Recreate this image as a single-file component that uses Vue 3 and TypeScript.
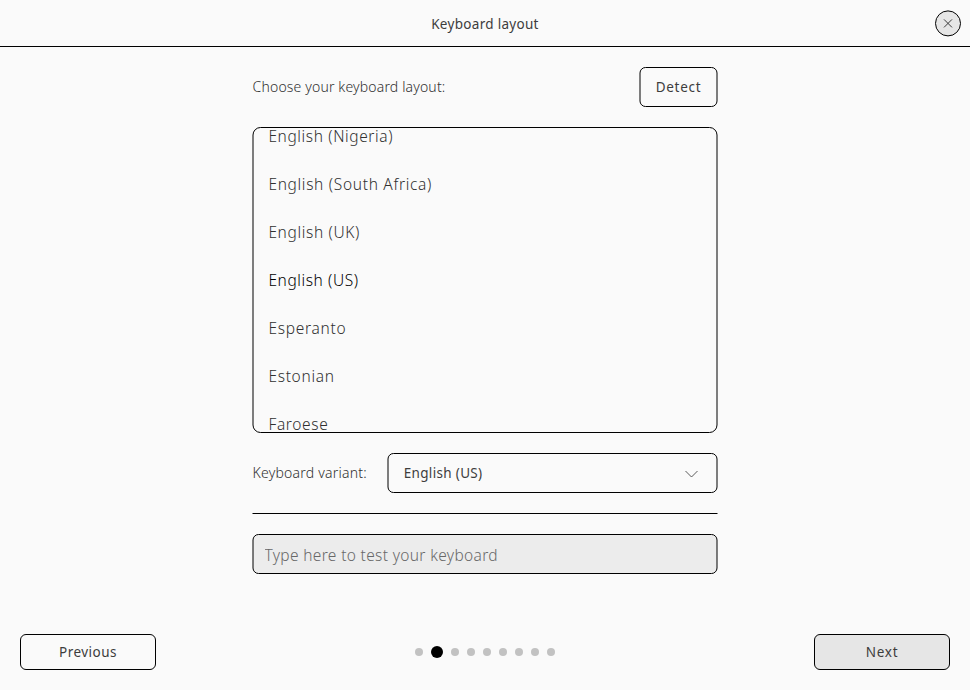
<script setup lang="ts">
import { ref } from 'vue'

interface Layout {
  name: string
  spacing: number
}

const layouts: Layout[] = [
  { name: 'English (Nigeria)', spacing: 0.62 },
  { name: 'English (South Africa)', spacing: 0.69 },
  { name: 'English (UK)', spacing: 0.65 },
  { name: 'English (US)', spacing: 0.6 },
  { name: 'Esperanto', spacing: 0.72 },
  { name: 'Estonian', spacing: 0.7 },
  { name: 'Faroese', spacing: 0.66 },
]
const selected = ref('English (US)')
const sample = ref('')
const steps = 9
const current = 2
</script>

<template>
  <div class="window">
    <header class="titlebar">
      <h1 class="title">Keyboard layout</h1>
      <button class="close" aria-label="Close">
        <svg width="28" height="28" viewBox="0 0 28 28">
          <circle cx="14" cy="14.4" r="12.5" fill="#e6e6e6" stroke="#000" />
          <path d="M10 10.4l8 8M18 10.4l-8 8" fill="none" stroke="#3d3d3d" />
        </svg>
      </button>
    </header>

    <main class="content">
      <div class="row">
        <span class="label choose">Choose your keyboard layout:</span>
        <button class="box detect">
          <svg class="frame" width="79" height="40"><rect x="1" y=".5" width="77" height="39" rx="5.5" /></svg>
          <span>Detect</span>
        </button>
      </div>

      <div class="box list">
        <svg class="frame" width="466" height="306"><rect x="1" y=".5" width="464" height="305" rx="7.5" /></svg>
        <ul class="items">
          <li
            v-for="item in layouts"
            :key="item.name"
            class="item"
            :class="{ active: item.name === selected }"
            :style="{ letterSpacing: item.spacing + 'px' }"
            @click="selected = item.name"
          >{{ item.name }}</li>
        </ul>
      </div>

      <div class="row variant-row">
        <span class="label variant-label">Keyboard variant:</span>
        <button class="box variant">
          <svg class="frame" width="331" height="40"><rect x="1" y=".5" width="329" height="39" rx="5.5" /></svg>
          <span>English (US)</span>
          <svg class="chevron" width="14" height="8" viewBox="0 0 14 8">
            <path d="M.5 1l6 6 6-6" fill="none" stroke="#3d3d3d" stroke-width=".85" />
          </svg>
        </button>
      </div>

      <svg class="divider" width="466" height="1"><rect x=".5" width="465" height="1" /></svg>

      <div class="box field">
        <svg class="frame filled" width="466" height="40"><rect x="1" y=".5" width="464" height="39" rx="5.5" /></svg>
        <input v-model="sample" class="input" placeholder="Type here to test your keyboard" />
      </div>
    </main>

    <footer class="footer">
      <button class="nav previous">Previous</button>
      <div class="dots">
        <i v-for="n in steps" :key="n" class="dot" :class="{ on: n === current }"></i>
      </div>
      <button class="nav next">Next</button>
    </footer>
  </div>
</template>

<style>
body {
  background: #fafafa;
}
</style>

<style scoped>
.window {
  display: flex;
  flex-direction: column;
  box-sizing: border-box;
  width: 970px;
  height: 690px;
  overflow: hidden;
  background: #fafafa;
  color: #3d3d3d;
  font-family: "Noto Sans", "Open Sans", sans-serif;
  font-size: 13.5px;
}
button {
  margin: 0;
  padding: 0;
  border: 0;
  background: none;
  color: inherit;
  font: inherit;
}
.titlebar {
  display: grid;
  grid-template-columns: 1fr auto 1fr;
  align-items: center;
  box-sizing: border-box;
  height: 47px;
  padding: 0 8px;
  border-bottom: 1px solid #000;
}
.title {
  grid-column: 2;
  margin: 0;
  padding-top: 2px;
  font-size: 13.5px;
  font-weight: 400;
  letter-spacing: 0.3px;
}
.close {
  justify-self: end;
  height: 28px;
}
.close svg {
  display: block;
}
.content {
  display: flex;
  flex-direction: column;
  gap: 20px;
  width: 466px;
  margin: 20px auto 0;
}
.row {
  display: flex;
  align-items: center;
  justify-content: space-between;
  height: 40px;
}
.label {
  padding: 0 0 2px 0.6px;
  color: #303030;
  font-size: 14px;
  font-weight: 300;
  white-space: nowrap;
}
.choose {
  letter-spacing: 0.16px;
}
.variant-label {
  letter-spacing: 0.22px;
}
.box {
  position: relative;
}
.frame {
  position: absolute;
  top: 0;
  left: 0;
  fill: none;
  stroke: #000;
  pointer-events: none;
}
.frame.filled {
  fill: #ececec;
}
.detect {
  width: 79px;
  height: 40px;
  letter-spacing: 0.72px;
}
.list {
  height: 306px;
}
.items {
  height: 304px;
  margin: 0;
  padding: 1px 0;
  overflow: hidden;
  list-style: none;
}
.item {
  height: 48px;
  padding-left: 16.4px;
  color: #303030;
  font-size: 15.5px;
  font-weight: 300;
  line-height: 48px;
}
.item:first-child {
  margin-top: -16px;
}
.item.active {
  color: #000;
}
.variant {
  display: flex;
  align-items: center;
  justify-content: space-between;
  box-sizing: border-box;
  width: 331px;
  height: 40px;
  padding: 0 19px 0 16.7px;
  letter-spacing: 0.33px;
}
.chevron {
  margin-top: 2px;
}
.divider {
  display: block;
  fill: #000;
}
.field {
  height: 40px;
}
.input {
  position: relative;
  display: block;
  box-sizing: border-box;
  width: 100%;
  height: 40px;
  padding: 2px 12.5px 0;
  border: 0;
  outline: 0;
  background: transparent;
  color: #3d3d3d;
  font-family: inherit;
  font-size: 15.5px;
  font-weight: 300;
  letter-spacing: 0.34px;
}
.input::placeholder {
  color: #686868;
  opacity: 1;
}
.footer {
  display: flex;
  align-items: center;
  justify-content: space-between;
  margin-top: auto;
  padding: 0 20px 20px;
}
.nav {
  box-sizing: border-box;
  width: 136px;
  height: 36px;
  border: 1px solid #000;
  border-radius: 6px;
}
.previous {
  letter-spacing: 0.48px;
}
.next {
  background: #e6e6e6;
  letter-spacing: 0.75px;
}
.dots {
  display: flex;
  align-items: center;
  gap: 8px;
}
.dot {
  width: 8px;
  height: 8px;
  border-radius: 50%;
  background: #c2c2c2;
}
.dot.on {
  width: 12px;
  height: 12px;
  background: #000;
}
</style>
